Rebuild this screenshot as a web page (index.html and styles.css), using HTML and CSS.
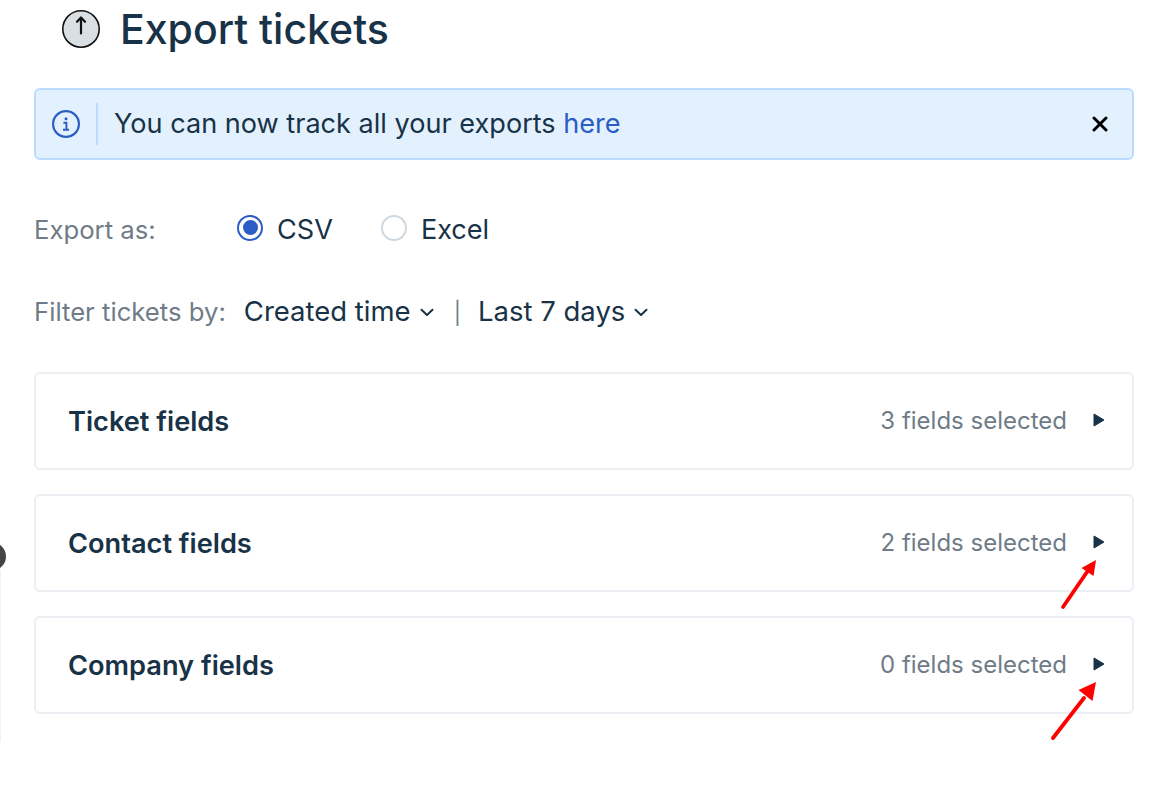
FILE: index.html
```html
<!DOCTYPE html>
<html lang="en">
<head>
<meta charset="utf-8">
<title>Export tickets</title>
<link rel="stylesheet" href="styles.css">
</head>
<body>
<div class="edge-dot"></div>
<div class="edge-line"></div>
<main class="page">
  <header class="title-row">
    <svg class="title-icon" width="40" height="40" viewBox="0 0 40 40">
      <circle cx="20" cy="20" r="18.2" fill="#dadfe3" stroke="#111" stroke-width="1.6"/>
      <path d="M20 24.500V8.800M16 12.800L20 8.500l4 4.300" fill="none" stroke="#111" stroke-width="2.200" stroke-linecap="round" stroke-linejoin="round"/>
    </svg>
    <h1 class="title">Export tickets</h1>
  </header>

  <div class="alert">
    <svg class="alert-icon" width="28" height="28" viewBox="0 0 28 28">
      <circle cx="14" cy="14" r="12.9" fill="none" stroke="#2c5cc5" stroke-width="2.200"/>
      <circle cx="14" cy="8.800" r="1.500" fill="#2c5cc5"/>
      <path d="M11.400 12.800h3v6.800M11 19.800h6" fill="none" stroke="#2c5cc5" stroke-width="1.900"/>
    </svg>
    <span class="alert-divider"></span>
    <p class="alert-text">You can now track all your exports <a class="link" href="#">here</a></p>
    <svg class="alert-close" width="16" height="16" viewBox="0 0 16 16">
      <path d="M2 2l12 12M14 2L2 14" stroke="#000" stroke-width="3" stroke-linecap="round"/>
    </svg>
  </div>

  <div class="export-row">
    <span class="label label-export">Export as:</span>
    <span class="radio radio-on"></span><span class="option option-csv">CSV</span>
    <span class="radio"></span><span class="option">Excel</span>
  </div>

  <div class="filter-row">
    <span class="label">Filter tickets by:</span>
    <span class="option filter-value filter-first">Created time</span>
    <svg class="chev" width="14" height="9" viewBox="0 0 14 9"><path d="M1.500 1.800L7 7l5.500-5.200" fill="none" stroke="#183247" stroke-width="2" stroke-linecap="round" stroke-linejoin="round"/></svg>
    <span class="sep">|</span>
    <span class="option filter-value">Last 7 days</span>
    <svg class="chev" width="14" height="9" viewBox="0 0 14 9"><path d="M1.500 1.800L7 7l5.500-5.200" fill="none" stroke="#183247" stroke-width="2" stroke-linecap="round" stroke-linejoin="round"/></svg>
  </div>

  <section class="cards">
    <div class="card">
      <span class="card-title">Ticket fields</span>
      <span class="card-count">3 fields selected</span>
      <svg class="caret" width="12" height="14" viewBox="0 0 12 14"><path d="M1 1L11 7 1 13z" fill="#183247" stroke="#183247" stroke-linejoin="round"/></svg>
    </div>
    <div class="card">
      <span class="card-title">Contact fields</span>
      <span class="card-count">2 fields selected</span>
      <svg class="caret" width="12" height="14" viewBox="0 0 12 14"><path d="M1 1L11 7 1 13z" fill="#183247" stroke="#183247" stroke-linejoin="round"/></svg>
    </div>
    <div class="card">
      <span class="card-title">Company fields</span>
      <span class="card-count">0 fields selected</span>
      <svg class="caret" width="12" height="14" viewBox="0 0 12 14"><path d="M1 1L11 7 1 13z" fill="#183247" stroke="#183247" stroke-linejoin="round"/></svg>
    </div>
  </section>
</main>

<svg class="arrow arrow-one" width="40" height="52" viewBox="0 0 40 52">
  <path d="M3 49L27 14" stroke="#fe0000" stroke-width="3.800" stroke-linecap="round"/>
  <path d="M36 2L33.500 18 21.500 10z" fill="#fe0000"/>
</svg>
<svg class="arrow arrow-two" width="50" height="60" viewBox="0 0 50 60">
  <path d="M2 57L33 17" stroke="#fe0000" stroke-width="3.800" stroke-linecap="round"/>
  <path d="M45 1L41.500 20 27.500 9z" fill="#fe0000"/>
</svg>
</body>
</html>
```

FILE: styles.css
```css
* { box-sizing: border-box; }
html, body { margin: 0; padding: 0; background: #fff; }
body {
  width: 1170px;
  height: 790px;
  overflow: hidden;
  position: relative;
  font-family: Inter, "Liberation Sans", sans-serif;
  color: #183247;
}
.page { width: 1134px; padding-left: 34px; }

.title-row { display: flex; align-items: center; height: 60px; padding-left: 27px; }
.title-icon { flex: none; margin-top: -2px; }
.title { margin: -2px 0 0 19px; font-size: 41px; line-height: 60px; font-weight: 500; letter-spacing: 0; }

.alert {
  margin-top: 28px;
  height: 72px;
  display: flex;
  align-items: center;
  background: #e2f1fd;
  border: 2px solid #bbdcfe;
  border-radius: 6px;
  padding: 0 24px 0 16px;
}
.alert-icon { flex: none; }
.alert-divider { width: 2px; height: 42px; background: #bbdcfe; margin-left: 16px; }
.alert-text { flex: 1; margin: 0 0 0 16px; font-size: 27.1px; line-height: 36px; }
.link { color: #2c5cc5; text-decoration: none; }
.alert-close { flex: none; }

.label { color: #6f7c87; font-size: 25.7px; line-height: 36px; }
.option { font-size: 27.1px; line-height: 36px; }

.export-row { display: flex; align-items: center; margin-top: 52px; height: 36px; }
.label-export { width: 203px; }
.radio { width: 26px; height: 26px; border-radius: 50%; border: 2px solid #cfd7df; background: #fff; margin: -5px 14px 0 0; flex: none; }
.radio-on { border-color: #2c5cc5; position: relative; }
.radio-on::after { content: ""; position: absolute; inset: 3.5px; border-radius: 50%; background: #2c5cc5; }
.option-csv { margin-right: 48px; }

.filter-row { display: flex; align-items: center; margin-top: 46px; height: 36px; }
.filter-value { font-size: 27.5px; margin-top: -2px; }
.filter-first { margin-left: 18px; }
.chev { margin-left: 9px; flex: none; }
.sep { color: #6f7c87; font-size: 22px; margin: 1px 17px 0 20px; }

.cards { margin-top: 42px; display: flex; flex-direction: column; gap: 24px; }
.card {
  height: 98px;
  display: flex;
  align-items: center;
  background: #fff;
  border: 2px solid #ebeff3;
  border-radius: 6px;
  padding: 0 27px 0 32px;
}
.card-title { flex: 1; font-size: 27.2px; font-weight: 600; }
.card-count { color: #6f7c87; font-size: 24px; letter-spacing: 0; margin-right: 26px; margin-top: -1px; }
.caret { flex: none; margin-top: -3px; }

.edge-dot { position: absolute; left: -20px; top: 543px; width: 26px; height: 27px; border-radius: 50%; background: #444; }
.edge-line { position: absolute; left: 0; top: 570px; width: 1px; height: 172px; background: #f3f3f3; }
.arrow { position: absolute; }
.arrow-one { left: 1060px; top: 558px; }
.arrow-two { left: 1051px; top: 681px; }
```
